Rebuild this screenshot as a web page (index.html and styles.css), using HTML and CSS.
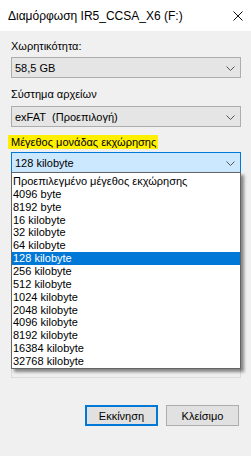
FILE: index.html
```html
<!DOCTYPE html>
<html lang="el">
  <head>
    <meta charset="UTF-8" />
    <meta name="viewport" content="width=device-width, initial-scale=1.0" />
    <title>Διαμόρφωση IR5_CCSA_X6 (F:)</title>
    <link rel="stylesheet" href="styles.css">
  </head>
  <body>
    <div class="window">
      <div class="titlebar">
        <span class="title">Διαμόρφωση IR5_CCSA_X6 (F:)</span>
        <svg class="close" width="10" height="10" viewBox="0 0 10 10">
          <path d="M0.5 0.5 L9.5 9.5 M9.5 0.5 L0.5 9.5" stroke="#111" stroke-width="1" fill="none" />
        </svg>
      </div>

      <div class="dialog">
        <div class="label label_first">Χωρητικότητα:</div>
        <div class="combo">
          <span>58,5 GB</span>
          <svg class="chevron" width="9" height="5" viewBox="0 0 9 5">
            <path d="M0.5 0.5 L4.5 4.5 L8.5 0.5" stroke="#555" stroke-width="1" fill="none" />
          </svg>
        </div>

        <div class="label label_second">Σύστημα αρχείων</div>
        <div class="combo">
          <span>exFAT&nbsp;&nbsp;(Προεπιλογή)</span>
          <svg class="chevron" width="9" height="5" viewBox="0 0 9 5">
            <path d="M0.5 0.5 L4.5 4.5 L8.5 0.5" stroke="#555" stroke-width="1" fill="none" />
          </svg>
        </div>

        <div class="label label_third"><span class="mark">Μέγεθος μονάδας εκχώρησης</span></div>
        <div class="combo combo_open">
          <span>128 kilobyte</span>
          <svg class="chevron" width="9" height="5" viewBox="0 0 9 5">
            <path d="M0.5 0.5 L4.5 4.5 L8.5 0.5" stroke="#555" stroke-width="1" fill="none" />
          </svg>
          <ul class="droplist">
            <li>Προεπιλεγμένο μέγεθος εκχώρησης</li>
            <li>4096 byte</li>
            <li>8192 byte</li>
            <li>16 kilobyte</li>
            <li>32 kilobyte</li>
            <li>64 kilobyte</li>
            <li class="selected">128 kilobyte</li>
            <li>256 kilobyte</li>
            <li>512 kilobyte</li>
            <li>1024 kilobyte</li>
            <li>2048 kilobyte</li>
            <li>4096 kilobyte</li>
            <li>8192 kilobyte</li>
            <li>16384 kilobyte</li>
            <li>32768 kilobyte</li>
          </ul>
        </div>

        <div class="groupbox"></div>

        <div class="buttons">
          <button class="btn btn_default">Εκκίνηση</button>
          <button class="btn">Κλείσιμο</button>
        </div>
      </div>
    </div>
  </body>
</html>
```

FILE: styles.css
```css
*,
*::before,
*::after {
  box-sizing: border-box;
}
html,
body {
  margin: 0;
  padding: 0;
}
body {
  font-family: "Liberation Sans", Arial, sans-serif;
  font-size: 11px;
  color: #000;
  background: #f0f0f0;
}

.window {
  width: 251px;
  height: 456px;
  background: #f0f0f0;
  overflow: hidden;
}

.titlebar {
  height: 31px;
  background: #fff;
  display: flex;
  align-items: center;
  justify-content: space-between;
  padding: 1px 8px 0 8px;
}
.title {
  font-size: 12px;
  line-height: 16px;
}

.dialog {
  padding: 0 10px 0 11px;
}

.label {
  line-height: 15px;
}
.label_first {
  margin-top: 8px;
  margin-bottom: 3px;
}
.label_second {
  margin-top: 9px;
  margin-bottom: 4px;
}
.label_third {
  margin-top: 8px;
  margin-bottom: 3px;
  line-height: 14px;
}
.mark {
  display: inline-block;
  background: #fff000;
  margin-left: -3px;
  padding: 0 2px 0 3px;
}

.combo {
  position: relative;
  height: 21px;
  border: 1px solid #adadad;
  background: #e5e5e5;
  display: flex;
  align-items: center;
  justify-content: space-between;
  padding: 1px 5px 0 3px;
}
.combo_open {
  border-color: #0078d7;
  background: #cce8ff;
}
.chevron {
  display: block;
}

.droplist {
  position: absolute;
  top: 100%;
  left: -1px;
  right: -1px;
  margin: 0;
  padding: 2px 0 0;
  list-style: none;
  background: #fff;
  border: 1px solid #646464;
  box-shadow: 3px 3px 3px rgba(0, 0, 0, 0.45);
  z-index: 2;
}
.droplist li {
  height: 12.87px;
  line-height: 12.87px;
  padding-left: 1px;
  white-space: nowrap;
}
.droplist li.selected {
  background: #0078d7;
  color: #fff;
}

.groupbox {
  margin-top: 14px;
  height: 191px;
  border: 1px solid #dcdcdc;
}

.buttons {
  display: flex;
  justify-content: flex-end;
  gap: 8px;
  margin-top: 27px;
  margin-right: 2px;
}
.btn {
  width: 73px;
  height: 21px;
  padding: 0;
  font: inherit;
  color: #000;
  background: #e1e1e1;
  border: 1px solid #adadad;
}
.btn_default {
  border: 2px solid #0078d7;
}
```
